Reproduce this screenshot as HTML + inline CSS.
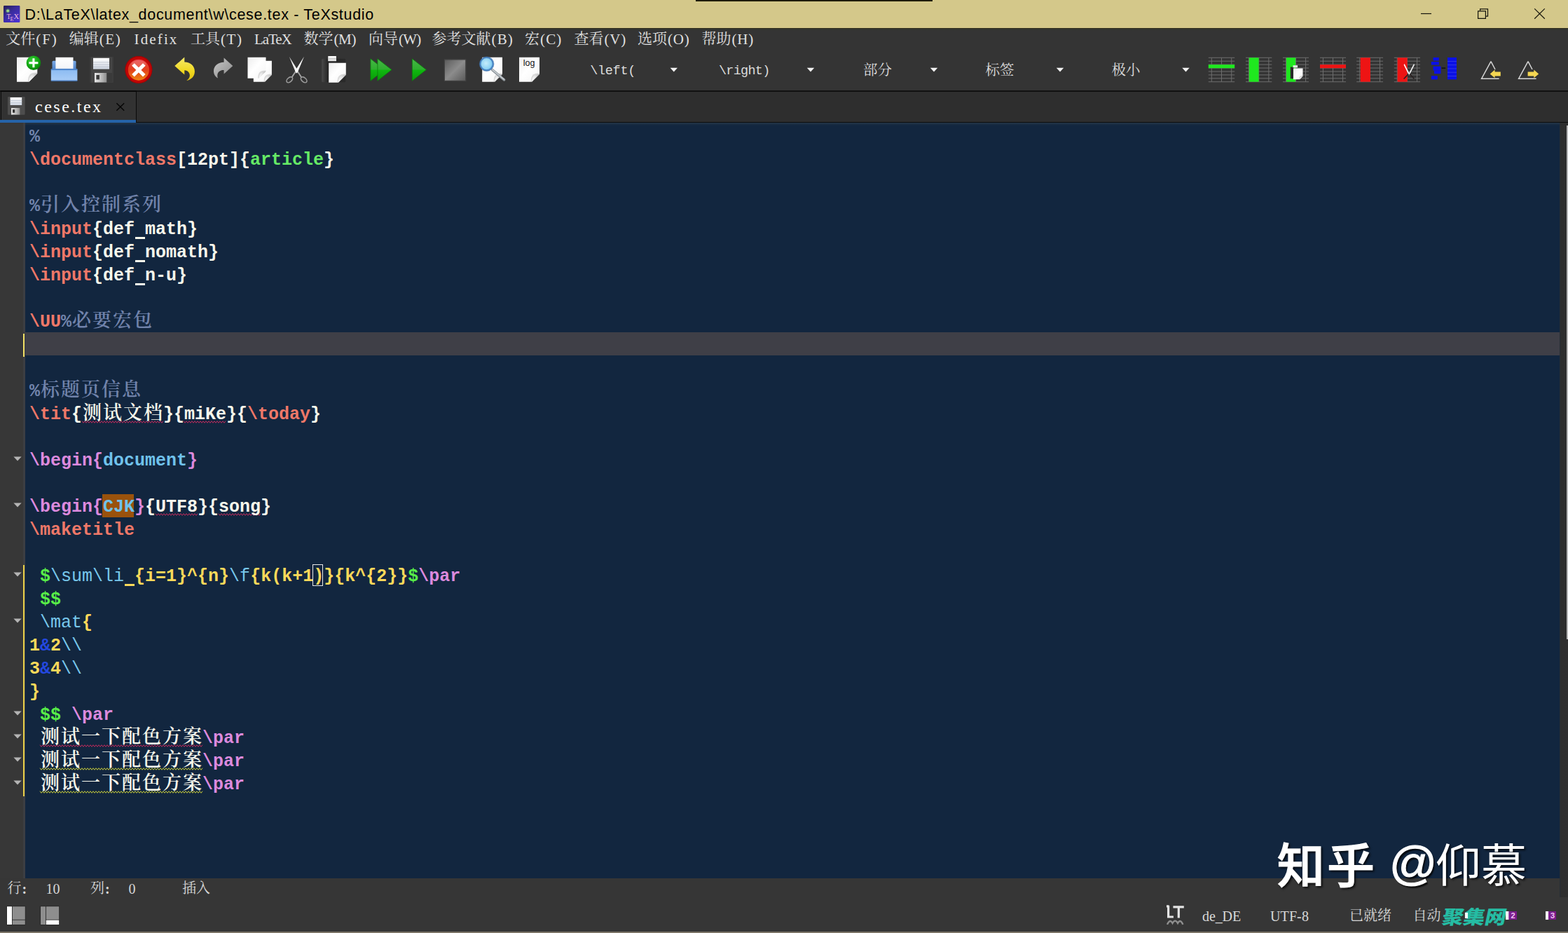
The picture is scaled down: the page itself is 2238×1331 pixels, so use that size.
<!DOCTYPE html>
<html><head><meta charset="utf-8"><title>TeXstudio</title><style>
html,body{margin:0;padding:0;}
body{width:2238px;height:1331px;overflow:hidden;background:#353535;position:relative;font-family:"Liberation Sans",sans-serif;}
.abs{position:absolute;}
.cj{position:absolute;white-space:nowrap;font-family:"Liberation Serif","Noto Serif CJK SC",serif;font-weight:normal;}
.cji{display:inline-block;vertical-align:top;margin-top:3px;height:27px;line-height:27px;font-family:"Liberation Serif","Noto Serif CJK SC",serif;font-size:27px;font-weight:600;letter-spacing:2px;padding-left:1px;box-sizing:border-box;white-space:nowrap;}
#title{left:0;top:0;width:2238px;height:40px;background:#d4c88a;}
#titletxt{left:36px;top:0;height:40px;line-height:39px;font-size:22px;color:#000;white-space:pre;letter-spacing:0px;}
#menubar{left:0;top:40px;width:2238px;height:30px;background:linear-gradient(#2f2c1a 0,#2f2c1a 1px,#323630 1.2px,#343434 4px);}
.mi{top:40px;height:30px;line-height:30px;font-family:"Liberation Serif",serif;font-size:20px;color:#dedede;white-space:pre;}
#toolbar{left:0;top:70px;width:2238px;height:59px;background:#343434;}
#tabbar{left:0;top:129px;width:2238px;height:46px;background:#2e2e2e;border-top:2px solid #111;box-sizing:border-box;}
#gutter{left:0;top:175px;width:36px;height:1078px;background:linear-gradient(90deg,#373737 0,#373737 33px,#3c3e43 33.5px,#3c3e43 36px);}
#editor{left:36px;top:175px;width:2190px;height:1078px;background:#12263f;}
#status{left:0;top:1253px;width:2238px;height:78px;background:#363636;}
.ln{position:absolute;left:42px;height:33px;line-height:37px;font-family:"Liberation Mono",monospace;font-weight:bold;font-size:25px;white-space:pre;color:#f8f8ec;letter-spacing:0;}

.nb{font-weight:normal;}
.us{-webkit-text-fill-color:transparent;background:linear-gradient(currentColor,currentColor) no-repeat 0.5px 24.6px/14px 3px;}
.c-cm{color:#7385ad;} .c-kw{color:#ef7868;} .c-w{color:#f8f8ec;} .c-g{color:#66ea66;}
.c-p{color:#dc8ade;} .c-b{color:#70c2ec;} .c-y{color:#fbd95a;} .c-d{color:#58ee48;}
.c-c{color:#78c8ec;} .c-a{color:#2448e0;}
</style></head><body><div id="title" class="abs"></div><div class="abs" style="left:993px;top:0;width:338px;height:2px;background:#1e1c08"></div><svg class="abs" style="left:0;top:0" width="600" height="40" viewBox="0 0 600 40"><text x="35.6" y="27.6" font-family="Liberation Sans, sans-serif" font-size="21.5" textLength="497.6" lengthAdjust="spacing" fill="#000">D:\LaTeX\latex_document\w\cese.tex - TeXstudio</text></svg><svg class="abs" style="left:0;top:0" width="40" height="40" viewBox="0 0 40 40"><defs><linearGradient id="gapp" x1="0" y1="0" x2=".8" y2="1"><stop offset="0" stop-color="#241e52"/><stop offset=".45" stop-color="#3a2c9c"/><stop offset="1" stop-color="#4a34d0"/></linearGradient></defs><rect x="5" y="8.1" width="23.4" height="23.8" rx="1.2" fill="url(#gapp)"/><circle cx="11.2" cy="15.4" r="2" fill="#b8e89a"/><circle cx="11.2" cy="15.4" r="3.2" fill="#6ab86a" opacity=".35"/><text x="9.6" y="27.4" font-family="Liberation Serif, serif" font-size="9.5" fill="#f0b8e0">T</text><text x="14.4" y="30" font-family="Liberation Serif, serif" font-size="8" fill="#f0b8e0">E</text><text x="19.6" y="27.4" font-family="Liberation Serif, serif" font-size="10.5" fill="#f0b8e0">X</text></svg><svg class="abs" style="left:2000px;top:0" width="238" height="40" viewBox="2000 0 238 40" fill="none" stroke="#15140c" stroke-width="1.2"><path d="M2028 19.5H2043"/><path d="M2109.6 15.9H2120.4V26.4H2109.6Z"/><path d="M2112.6 15.6V12.8H2123.5V23.2H2120.7"/><path d="M2190.2 12.4 2204.8 26.8M2204.8 12.4 2190.2 26.8"/></svg><div id="menubar" class="abs"></div><div id="toolbar" class="abs"></div><div id="tabbar" class="abs"></div><div id="gutter" class="abs"></div><div id="editor" class="abs"></div><div id="status" class="abs"></div><div class="cj" style="left:8.3px;top:45px;height:21px;line-height:21px;font-size:21px;color:#e0e0e0;">文件</div><div class="abs" style="left:51.3px;top:41.4px;height:30px;line-height:30px;font-family:'Liberation Serif';font-size:21px;font-weight:normal;color:#e0e0e0;white-space:pre;letter-spacing:1.944px">(F)</div><div class="cj" style="left:98.8px;top:45px;height:21px;line-height:21px;font-size:21px;color:#e0e0e0;">编辑</div><div class="abs" style="left:141.8px;top:41.4px;height:30px;line-height:30px;font-family:'Liberation Serif';font-size:21px;font-weight:normal;color:#e0e0e0;white-space:pre;letter-spacing:1.561px">(E)</div><div class="abs" style="left:191.5px;top:41.4px;height:30px;line-height:30px;font-family:'Liberation Serif';font-size:21px;font-weight:normal;color:#e0e0e0;white-space:pre;letter-spacing:2.143px">Idefix</div><div class="cj" style="left:272px;top:45px;height:21px;line-height:21px;font-size:21px;color:#e0e0e0;">工具</div><div class="abs" style="left:315px;top:41.4px;height:30px;line-height:30px;font-family:'Liberation Serif';font-size:21px;font-weight:normal;color:#e0e0e0;white-space:pre;letter-spacing:1.561px">(T)</div><div class="abs" style="left:363px;top:41.4px;height:30px;line-height:30px;font-family:'Liberation Serif';font-size:21px;font-weight:normal;color:#e0e0e0;white-space:pre;letter-spacing:-1.099px">LaTeX</div><div class="cj" style="left:433.5px;top:45px;height:21px;line-height:21px;font-size:21px;color:#e0e0e0;">数学</div><div class="abs" style="left:476.5px;top:41.4px;height:30px;line-height:30px;font-family:'Liberation Serif';font-size:21px;font-weight:normal;color:#e0e0e0;white-space:pre;letter-spacing:-0.386px">(M)</div><div class="cj" style="left:526px;top:45px;height:21px;line-height:21px;font-size:21px;color:#e0e0e0;">向导</div><div class="abs" style="left:569px;top:41.4px;height:30px;line-height:30px;font-family:'Liberation Serif';font-size:21px;font-weight:normal;color:#e0e0e0;white-space:pre;letter-spacing:-0.769px">(W)</div><div class="cj" style="left:616.5px;top:45px;height:21px;line-height:21px;font-size:21px;color:#e0e0e0;">参考文献</div><div class="abs" style="left:701.5px;top:41.4px;height:30px;line-height:30px;font-family:'Liberation Serif';font-size:21px;font-weight:normal;color:#e0e0e0;white-space:pre;letter-spacing:1.169px">(B)</div><div class="cj" style="left:749px;top:45px;height:21px;line-height:21px;font-size:21px;color:#e0e0e0;">宏</div><div class="abs" style="left:771px;top:41.4px;height:30px;line-height:30px;font-family:'Liberation Serif';font-size:21px;font-weight:normal;color:#e0e0e0;white-space:pre;letter-spacing:1.169px">(C)</div><div class="cj" style="left:819.5px;top:45px;height:21px;line-height:21px;font-size:21px;color:#e0e0e0;">查看</div><div class="abs" style="left:862.5px;top:41.4px;height:30px;line-height:30px;font-family:'Liberation Serif';font-size:21px;font-weight:normal;color:#e0e0e0;white-space:pre;letter-spacing:0.782px">(V)</div><div class="cj" style="left:910px;top:45px;height:21px;line-height:21px;font-size:21px;color:#e0e0e0;">选项</div><div class="abs" style="left:953px;top:41.4px;height:30px;line-height:30px;font-family:'Liberation Serif';font-size:21px;font-weight:normal;color:#e0e0e0;white-space:pre;letter-spacing:0.782px">(O)</div><div class="cj" style="left:1001.5px;top:45px;height:21px;line-height:21px;font-size:21px;color:#e0e0e0;">帮助</div><div class="abs" style="left:1044.5px;top:41.4px;height:30px;line-height:30px;font-family:'Liberation Serif';font-size:21px;font-weight:normal;color:#e0e0e0;white-space:pre;letter-spacing:0.782px">(H)</div><svg class="abs" style="left:0;top:0" width="2238" height="180" viewBox="0 0 2238 180"><defs>
<linearGradient id="gpage" x1="0" y1="0" x2="1" y2="1"><stop offset="0" stop-color="#ededed"/><stop offset=".45" stop-color="#ffffff"/><stop offset="1" stop-color="#f4f4f4"/></linearGradient>
<linearGradient id="gcurl" x1="1" y1="0" x2="0" y2="1"><stop offset="0" stop-color="#b4b4b4"/><stop offset=".45" stop-color="#e6e6e6"/><stop offset="1" stop-color="#ffffff"/></linearGradient>
<radialGradient id="ggreen" cx=".4" cy=".35" r=".7"><stop offset="0" stop-color="#3fd23f"/><stop offset=".6" stop-color="#12a812"/><stop offset="1" stop-color="#0a7a0a"/></radialGradient>
<linearGradient id="gtray" x1="0" y1="0" x2="0" y2="1"><stop offset="0" stop-color="#5d96dd"/><stop offset=".15" stop-color="#8fbdf2"/><stop offset="1" stop-color="#a9cdf7"/></linearGradient>
<linearGradient id="gtrayb" x1="0" y1="0" x2="0" y2="1"><stop offset="0" stop-color="#7aa9e6"/><stop offset="1" stop-color="#4f82c8"/></linearGradient>
<linearGradient id="gpaper" x1="0" y1="0" x2="0" y2="1"><stop offset="0" stop-color="#ffffff"/><stop offset=".8" stop-color="#f6f7fa"/><stop offset="1" stop-color="#dfe6f0"/></linearGradient>
<linearGradient id="glabel" x1="0" y1="0" x2="0" y2="1"><stop offset="0" stop-color="#ffffff"/><stop offset="1" stop-color="#cfd6e2"/></linearGradient>
<linearGradient id="gmetal" x1="0" y1="0" x2="1" y2="0"><stop offset="0" stop-color="#e8e8e8"/><stop offset=".6" stop-color="#b8b8b8"/><stop offset="1" stop-color="#8c8c8c"/></linearGradient>
<radialGradient id="gred" cx=".5" cy=".3" r=".8"><stop offset="0" stop-color="#f06a5a"/><stop offset=".5" stop-color="#e84a1a"/><stop offset="1" stop-color="#ea7a10"/></radialGradient>
<linearGradient id="gredin" x1="0" y1="0" x2="0" y2="1"><stop offset="0" stop-color="#e8434a"/><stop offset=".5" stop-color="#e2401c"/><stop offset="1" stop-color="#ee8612"/></linearGradient>
<linearGradient id="gyel" x1="0" y1="0" x2="0" y2="1"><stop offset="0" stop-color="#f6ea6a"/><stop offset=".6" stop-color="#f0d820"/><stop offset="1" stop-color="#e0c010"/></linearGradient>
<linearGradient id="ggrey" x1="0" y1="0" x2="1" y2="1"><stop offset="0" stop-color="#c8c8c8"/><stop offset="1" stop-color="#8a8a8a"/></linearGradient>
<linearGradient id="gplay" x1="0" y1="0" x2="0" y2="1"><stop offset="0" stop-color="#46b846"/><stop offset=".48" stop-color="#2fae2f"/><stop offset=".52" stop-color="#0fb80f"/><stop offset="1" stop-color="#0a9a0a"/></linearGradient>
<linearGradient id="gstop" x1="0" y1="0" x2="1" y2="1"><stop offset="0" stop-color="#5c5c5c"/><stop offset=".5" stop-color="#8c8c8c"/><stop offset="1" stop-color="#5a5a5a"/></linearGradient>
<radialGradient id="glens" cx=".45" cy=".45" r=".6"><stop offset="0" stop-color="#c4ecfb"/><stop offset=".7" stop-color="#8ed3f4"/><stop offset="1" stop-color="#5aa6dc"/></radialGradient>
<linearGradient id="gclip" x1="0" y1="0" x2="1" y2="0"><stop offset="0" stop-color="#4a4a4a"/><stop offset=".25" stop-color="#262626"/><stop offset="1" stop-color="#2a2a2a"/></linearGradient>
</defs><path d="M24 81.8H53.3V104.7L41.3 116.7H24Z" fill="url(#gpage)"/><path d="M53.3 103.5Q38.9 102.3 40.1 116.7L41.3 116.7L53.3 104.7Z" fill="#000" opacity=".13"/><path d="M53.3 104.7Q41.5 104.9 41.3 116.7Z" fill="url(#gcurl)"/><circle cx="47.9" cy="89.7" r="10.3" fill="url(#ggreen)"/><path d="M46.4 83.2h3v5h5v3h-5v5h-3v-5h-5v-3h5z" fill="#fff"/><rect x="74.5" y="86.7" width="34" height="13" rx="1.5" fill="url(#gtrayb)"/><rect x="79.4" y="81.8" width="25.1" height="17" fill="url(#gpaper)"/><rect x="72.8" y="98.3" width="37.6" height="17.2" rx="1.2" fill="url(#gtray)"/><rect x="72.8" y="98.3" width="37.6" height="1.6" fill="#4a80c8"/><rect x="72.8" y="114.5" width="37.6" height="1.6" fill="#3a6cb0" opacity=".8"/><rect x="128" y="81.3" width="34" height="36.4" rx="1.5" fill="#454545"/><rect x="152.4" y="104" width="7.4" height="13.5" fill="#3a3a3a"/><rect x="128" y="81.3" width="2" height="36.4" fill="#3a3a3a"/><rect x="160" y="81.3" width="2" height="36.4" fill="#3c3c3c"/><rect x="133" y="82.8" width="23" height="15.8" fill="url(#glabel)"/><rect x="133" y="88.3" width="23" height="1" fill="#c3c9d4"/><rect x="133" y="91.6" width="23" height="1" fill="#c3c9d4"/><rect x="133" y="94.9" width="23" height="1" fill="#bcc3cf"/><rect x="135" y="104" width="17.2" height="13.5" fill="url(#gmetal)"/><rect x="137.4" y="107" width="4.5" height="6.4" fill="#3a3a3a"/><circle cx="197.9" cy="99.5" r="19.4" fill="#c20606"/><circle cx="197.9" cy="99.5" r="18.9" fill="none" stroke="#8e0000" stroke-width="1.2" opacity=".55"/><circle cx="197.9" cy="99.7" r="15" fill="url(#gredin)"/><ellipse cx="197.9" cy="91.6" rx="10.5" ry="5.6" fill="#fff" opacity=".16"/><path d="M190 92 205.8 107.8M205.8 92 190 107.8" stroke="#fff" stroke-width="5.1" stroke-linecap="butt"/><path d="M249.3 94.1 263.3 81.6 263.3 88.6C272 88.8 278.2 94.5 277.9 102.5 277.6 109.5 272.5 113.8 266.3 115 271 111.5 272 107 269.6 103.5 268 101.2 265.8 100.3 263.3 100.2L263.3 106.6Z" fill="url(#gyel)"/><path d="M332.3 94.1 319.6 82.6 319.6 88.8C311.5 89 305 94 305 101.2 305 106.2 307.6 109.6 310.9 111.4 309.6 107.6 310.3 104.2 312.8 102 314.6 100.4 317 99.8 319.6 99.9L319.6 105.6Z" fill="url(#ggrey)"/><path d="M361.8 86.7H387.9V106.7L377.9 116.7H361.8Z" fill="url(#gpage)"/><path d="M387.9 105.5Q375.9 104.7 376.7 116.7L377.9 116.7L387.9 106.7Z" fill="#000" opacity=".13"/><path d="M387.9 106.7Q378.1 106.9 377.9 116.7Z" fill="url(#gcurl)"/><path d="M379.5 86.7V101.8L369.5 111.8V116.7" fill="none" stroke="#bdbdbd" stroke-width="0"/><path d="M353.5 81.8H379.5V101.8L369.5 111.8H353.5Z" fill="url(#gpage)"/><path d="M379.5 100.6Q367.5 99.8 368.3 111.8L369.5 111.8L379.5 101.8Z" fill="#000" opacity=".13"/><path d="M379.5 101.8Q369.7 102.0 369.5 111.8Z" fill="url(#gcurl)"/><path d="M412.8 80.8 425.8 101.4 422.6 104.4Z" fill="#f2f2f2"/><path d="M434 80.8 421 101.4 424.2 104.4Z" fill="#ffffff"/><path d="M425.2 102.6 430.2 110.2M421.6 102.6 416.6 110.2" stroke="#a8a8a8" stroke-width="1.8" fill="none"/><ellipse cx="413.3" cy="113.8" rx="5" ry="3" transform="rotate(-40 413.3 113.8)" fill="none" stroke="#9c9c9c" stroke-width="1.6"/><ellipse cx="433.7" cy="113.8" rx="5" ry="3" transform="rotate(40 433.7 113.8)" fill="none" stroke="#9c9c9c" stroke-width="1.6"/><rect x="459.3" y="83.8" width="34" height="33.4" rx="1.5" fill="url(#gclip)"/><rect x="468.2" y="80" width="11.8" height="7.2" fill="#e6e6e6"/><rect x="469.2" y="80" width="9.8" height="2" fill="#ffffff"/><rect x="468.2" y="83.4" width="11.8" height="1" fill="#bdbdbd"/><path d="M469.2 89.7H493.8V106.7L482.8 117.7H469.2Z" fill="url(#gpage)"/><path d="M493.8 105.5Q480.6 104.5 481.6 117.7L482.8 117.7L493.8 106.7Z" fill="#000" opacity=".13"/><path d="M493.8 106.7Q483.0 106.9 482.8 117.7Z" fill="url(#gcurl)"/><path d="M528.9 83.8 549 99.5 528.9 115.3Z" fill="url(#gplay)" stroke="#0c7a0c" stroke-width=".8"/><path d="M538.9 83.8 559 99.5 538.9 115.3Z" fill="url(#gplay)" stroke="#0c7a0c" stroke-width=".8"/><path d="M588.3 83.8 608.4 99.5 588.3 115.3Z" fill="url(#gplay)" stroke="#0c7a0c" stroke-width=".8"/><rect x="634.8" y="85.3" width="29.6" height="29.6" fill="url(#gstop)"/><rect x="634.3" y="84.8" width="30.6" height="30.6" fill="none" stroke="#454545" stroke-width="1"/><path d="M688.2 81.8H717V105.7L706 116.7H688.2Z" fill="url(#gpage)"/><path d="M717 104.5Q703.8 103.5 704.8 116.7L706 116.7L717 105.7Z" fill="#000" opacity=".13"/><path d="M717 105.7Q706.2 105.9 706 116.7Z" fill="url(#gcurl)"/><path d="M702.6 99.6 719.6 113.8" stroke="#8f969c" stroke-width="3.6" stroke-linecap="round"/><path d="M702.6 99.2 719.4 113.2" stroke="#cfd4d8" stroke-width="1.3" stroke-linecap="round"/><circle cx="694.6" cy="91.2" r="9.2" fill="url(#glens)" stroke="#4a86c4" stroke-width="2.2"/><circle cx="694.6" cy="91.2" r="10.4" fill="none" stroke="#2e5f98" stroke-width=".6" opacity=".7"/><path d="M741 81.8H770V105.7L759 116.7H741Z" fill="url(#gpage)"/><path d="M770 104.5Q756.8 103.5 757.8 116.7L759 116.7L770 105.7Z" fill="#000" opacity=".13"/><path d="M770 105.7Q759.2 105.9 759 116.7Z" fill="url(#gcurl)"/><text x="755.2" y="93.6" font-family="Liberation Sans, sans-serif" font-size="12.5" text-anchor="middle" fill="#111">log</text><path d="M956.5999999999999 96.8H967.0L961.8 102.4Z" fill="#f2f2f2"/><path d="M1151.8 96.8H1162.2L1157 102.4Z" fill="#f2f2f2"/><path d="M1327.8 96.8H1338.2L1333 102.4Z" fill="#f2f2f2"/><path d="M1507.8 96.8H1518.2L1513 102.4Z" fill="#f2f2f2"/><path d="M1687.3 96.8H1697.7L1692.5 102.4Z" fill="#f2f2f2"/><rect x="1724.8" y="81.80" width="37.4" height="1" fill="#6d6d6d"/><rect x="1724.8" y="86.71" width="37.4" height="1" fill="#6d6d6d"/><rect x="1724.8" y="91.63" width="37.4" height="1" fill="#6d6d6d"/><rect x="1724.8" y="96.54" width="37.4" height="1" fill="#6d6d6d"/><rect x="1724.8" y="101.46" width="37.4" height="1" fill="#6d6d6d"/><rect x="1724.8" y="106.37" width="37.4" height="1" fill="#6d6d6d"/><rect x="1724.8" y="111.29" width="37.4" height="1" fill="#6d6d6d"/><rect x="1724.8" y="116.20" width="37.4" height="1" fill="#6d6d6d"/><rect x="1728.79" y="82.3" width="1" height="34.4" fill="#6d6d6d"/><rect x="1743.00" y="82.3" width="1" height="34.4" fill="#6d6d6d"/><rect x="1757.21" y="82.3" width="1" height="34.4" fill="#6d6d6d"/><rect x="1724.8" y="92.2" width="37.4" height="5" fill="#1fe81f"/><rect x="1778" y="81.80" width="37.3" height="1" fill="#6d6d6d"/><rect x="1778" y="86.71" width="37.3" height="1" fill="#6d6d6d"/><rect x="1778" y="91.63" width="37.3" height="1" fill="#6d6d6d"/><rect x="1778" y="96.54" width="37.3" height="1" fill="#6d6d6d"/><rect x="1778" y="101.46" width="37.3" height="1" fill="#6d6d6d"/><rect x="1778" y="106.37" width="37.3" height="1" fill="#6d6d6d"/><rect x="1778" y="111.29" width="37.3" height="1" fill="#6d6d6d"/><rect x="1778" y="116.20" width="37.3" height="1" fill="#6d6d6d"/><rect x="1781.98" y="82.3" width="1" height="34.4" fill="#6d6d6d"/><rect x="1796.15" y="82.3" width="1" height="34.4" fill="#6d6d6d"/><rect x="1810.32" y="82.3" width="1" height="34.4" fill="#6d6d6d"/><rect x="1782.8" y="82.3" width="13.8" height="34.4" fill="#1fe81f"/><rect x="1831" y="81.80" width="37.0" height="1" fill="#6d6d6d"/><rect x="1831" y="86.71" width="37.0" height="1" fill="#6d6d6d"/><rect x="1831" y="91.63" width="37.0" height="1" fill="#6d6d6d"/><rect x="1831" y="96.54" width="37.0" height="1" fill="#6d6d6d"/><rect x="1831" y="101.46" width="37.0" height="1" fill="#6d6d6d"/><rect x="1831" y="106.37" width="37.0" height="1" fill="#6d6d6d"/><rect x="1831" y="111.29" width="37.0" height="1" fill="#6d6d6d"/><rect x="1831" y="116.20" width="37.0" height="1" fill="#6d6d6d"/><rect x="1834.94" y="82.3" width="1" height="34.4" fill="#6d6d6d"/><rect x="1849.00" y="82.3" width="1" height="34.4" fill="#6d6d6d"/><rect x="1863.06" y="82.3" width="1" height="34.4" fill="#6d6d6d"/><rect x="1836" y="82.3" width="13.2" height="34.4" fill="#1fe81f"/><rect x="1841.8" y="95.6" width="5" height="16.6" fill="#2a2a2a"/><rect x="1845.5" y="93.2" width="6.6" height="3.2" fill="#e8e8e8"/><path d="M1846 97.4H1859.5V108.8L1855.0 113.3H1846Z" fill="url(#gpage)"/><path d="M1859.5 107.6Q1854.1 107.9 1853.8 113.3L1855.0 113.3L1859.5 108.8Z" fill="#000" opacity=".13"/><path d="M1859.5 108.8Q1855.1 108.9 1855.0 113.3Z" fill="url(#gcurl)"/><rect x="1884" y="81.80" width="37.0" height="1" fill="#6d6d6d"/><rect x="1884" y="86.71" width="37.0" height="1" fill="#6d6d6d"/><rect x="1884" y="91.63" width="37.0" height="1" fill="#6d6d6d"/><rect x="1884" y="96.54" width="37.0" height="1" fill="#6d6d6d"/><rect x="1884" y="101.46" width="37.0" height="1" fill="#6d6d6d"/><rect x="1884" y="106.37" width="37.0" height="1" fill="#6d6d6d"/><rect x="1884" y="111.29" width="37.0" height="1" fill="#6d6d6d"/><rect x="1884" y="116.20" width="37.0" height="1" fill="#6d6d6d"/><rect x="1887.94" y="82.3" width="1" height="34.4" fill="#6d6d6d"/><rect x="1902.00" y="82.3" width="1" height="34.4" fill="#6d6d6d"/><rect x="1916.06" y="82.3" width="1" height="34.4" fill="#6d6d6d"/><rect x="1884" y="92.2" width="37" height="5" fill="#ee1414"/><rect x="1936.2" y="81.80" width="37.8" height="1" fill="#6d6d6d"/><rect x="1936.2" y="86.71" width="37.8" height="1" fill="#6d6d6d"/><rect x="1936.2" y="91.63" width="37.8" height="1" fill="#6d6d6d"/><rect x="1936.2" y="96.54" width="37.8" height="1" fill="#6d6d6d"/><rect x="1936.2" y="101.46" width="37.8" height="1" fill="#6d6d6d"/><rect x="1936.2" y="106.37" width="37.8" height="1" fill="#6d6d6d"/><rect x="1936.2" y="111.29" width="37.8" height="1" fill="#6d6d6d"/><rect x="1936.2" y="116.20" width="37.8" height="1" fill="#6d6d6d"/><rect x="1940.24" y="82.3" width="1" height="34.4" fill="#6d6d6d"/><rect x="1954.60" y="82.3" width="1" height="34.4" fill="#6d6d6d"/><rect x="1968.96" y="82.3" width="1" height="34.4" fill="#6d6d6d"/><rect x="1941.7" y="82.3" width="14.2" height="34.4" fill="#ee1414"/><rect x="1989.8" y="81.80" width="37.2" height="1" fill="#6d6d6d"/><rect x="1989.8" y="86.71" width="37.2" height="1" fill="#6d6d6d"/><rect x="1989.8" y="91.63" width="37.2" height="1" fill="#6d6d6d"/><rect x="1989.8" y="96.54" width="37.2" height="1" fill="#6d6d6d"/><rect x="1989.8" y="101.46" width="37.2" height="1" fill="#6d6d6d"/><rect x="1989.8" y="106.37" width="37.2" height="1" fill="#6d6d6d"/><rect x="1989.8" y="111.29" width="37.2" height="1" fill="#6d6d6d"/><rect x="1989.8" y="116.20" width="37.2" height="1" fill="#6d6d6d"/><rect x="1993.76" y="82.3" width="1" height="34.4" fill="#6d6d6d"/><rect x="2007.90" y="82.3" width="1" height="34.4" fill="#6d6d6d"/><rect x="2022.04" y="82.3" width="1" height="34.4" fill="#6d6d6d"/><rect x="1994.6" y="82.3" width="14.1" height="34.4" fill="#ee1414"/><path d="M2004.6 91 2012 105.4 2010.6 106.8 2003.6 92.6Z" fill="#fff"/><path d="M2018 91 2010.4 105.4 2011.8 106.8 2019 92.6Z" fill="#f0f0f0"/><path d="M2010.4 105.6 2003.6 112.6M2012.2 105.6 2018.4 112.6" stroke="#2a2020" stroke-width="1.5" fill="none"/><rect x="2066" y="82" width="13" height="31.4" fill="#0a10e6"/><rect x="2045.6" y="82" width="8.2" height="4.6" fill="#0a10e6"/><rect x="2042.8" y="88" width="11" height="4.6" fill="#0a10e6"/><rect x="2045.6" y="94.6" width="10.9" height="6" fill="#0a10e6"/><rect x="2047" y="100.6" width="9.5" height="4.6" fill="#0a10e6"/><rect x="2042.8" y="108.2" width="9" height="5.2" fill="#0a10e6"/><rect x="2057.6" y="96.4" width="5.6" height="1.6" fill="#111"/><rect x="2066" y="87.2" width="13" height=".7" fill="#5a60e8" opacity=".7"/><rect x="2066" y="92.4" width="13" height=".7" fill="#5a60e8" opacity=".7"/><rect x="2066" y="97.6" width="13" height=".7" fill="#5a60e8" opacity=".7"/><rect x="2066" y="102.8" width="13" height=".7" fill="#5a60e8" opacity=".7"/><rect x="2066" y="108.0" width="13" height=".7" fill="#5a60e8" opacity=".7"/><path d="M2128 87.6 2114.6 112.2H2139.6" fill="none" stroke="#d6d6d6" stroke-width="1.5" stroke-linejoin="miter"/><path d="M2128 87.6 2134 99" stroke="#d6d6d6" stroke-width="1.5"/><path d="M2126.7 105.4 2133.6 99.5V102.4H2141.8V108.6H2133.6V111.3Z" fill="#f4d652"/><path d="M2181 87.6 2167.6 112.2H2192.6" fill="none" stroke="#d6d6d6" stroke-width="1.5"/><path d="M2181 87.6 2187 99" stroke="#d6d6d6" stroke-width="1.5"/><path d="M2196.2 105.4 2189.3 99.5V102.4H2180.6V108.6H2189.3V111.3Z" fill="#f4d652"/></svg><div class="abs" style="left:842.2px;top:87px;height:30px;line-height:30px;font-family:'Liberation Mono';font-size:18.5px;font-weight:normal;color:#dcdcdc;white-space:pre;letter-spacing:-0.302px">\left(</div><div class="abs" style="left:1026px;top:87px;height:30px;line-height:30px;font-family:'Liberation Mono';font-size:18.5px;font-weight:normal;color:#dcdcdc;white-space:pre;letter-spacing:-0.730px">\right)</div><div class="cj" style="left:1232px;top:89.5px;height:20.5px;line-height:20.5px;font-size:20.5px;color:#dcdcdc;">部分</div><div class="cj" style="left:1406.5px;top:89.5px;height:20.5px;line-height:20.5px;font-size:20.5px;color:#dcdcdc;">标签</div><div class="cj" style="left:1586.5px;top:89.5px;height:20.5px;line-height:20.5px;font-size:20.5px;color:#dcdcdc;">极小</div><div class="abs" style="left:1px;top:129px;width:193.5px;height:46px;background:#323232;border:solid #0a0a0a;border-width:2px 1px 0 1px;box-sizing:border-box"></div><div class="abs" style="left:194px;top:174px;width:2044px;height:1.4px;background:#0c0c0c"></div><div class="abs" style="left:0;top:170.6px;width:194px;height:4.6px;background:#2563a9"></div><svg class="abs" style="left:0;top:125px" width="200" height="50" viewBox="0 125 200 50"><rect x="11" y="138" width="24.6" height="25.8" rx="1" fill="#4d4d4d"/><rect x="14.6" y="139" width="16.6" height="11" fill="url(#glabel)"/><rect x="14.6" y="143" width="16.6" height=".8" fill="#bcc5d2"/><rect x="14.6" y="146" width="16.6" height=".8" fill="#bcc5d2"/><rect x="16" y="154" width="12.4" height="9.6" fill="url(#gmetal)"/><rect x="18" y="156.2" width="3.2" height="4.6" fill="#333"/><path d="M166.4 147.2 177.2 157.8M177.2 147.2 166.4 157.8" stroke="#050505" stroke-width="1.4"/></svg><div class="abs" style="left:50px;top:136.6px;height:30px;line-height:30px;font-family:'Liberation Serif';font-size:24px;font-weight:normal;color:#ffffff;white-space:pre;letter-spacing:2.497px">cese.tex</div><div class="abs" style="left:36px;top:175px;width:2190px;height:4px;background:linear-gradient(#243648,#12263f)"></div><div class="abs" style="left:36px;top:474px;width:2190px;height:33px;background:#3f3f47"></div><div class="abs" style="left:32.8px;top:476px;width:2.6px;height:33px;background:#f2e066"></div><div class="abs" style="left:33px;top:806px;width:2.4px;height:330px;background:#e8d04a"></div><div class="abs" style="left:146px;top:705px;width:45px;height:33px;background:#9a520c"></div><div class="abs" style="left:446px;top:805px;width:15px;height:31px;border:1px solid #e8e8e8;box-sizing:border-box"></div><svg class="abs" style="left:0;top:597.5px" width="237" height="8" viewBox="0 597.5 237 8"><path d="M117.0 600.2L119.0 602.8L121.0 600.2L123.0 602.8L125.0 600.2L127.0 602.8L129.0 600.2L131.0 602.8L133.0 600.2L135.0 602.8L137.0 600.2L139.0 602.8L141.0 600.2L143.0 602.8L145.0 600.2L147.0 602.8L149.0 600.2L151.0 602.8L153.0 600.2L155.0 602.8L157.0 600.2L159.0 602.8L161.0 600.2L163.0 602.8L165.0 600.2L167.0 602.8L169.0 600.2L171.0 602.8L173.0 600.2L175.0 602.8L177.0 600.2L179.0 602.8L181.0 600.2L183.0 602.8L185.0 600.2L187.0 602.8L189.0 600.2L191.0 602.8L193.0 600.2L195.0 602.8L197.0 600.2L199.0 602.8L201.0 600.2L203.0 602.8L205.0 600.2L207.0 602.8L209.0 600.2L211.0 602.8L213.0 600.2L215.0 602.8L217.0 600.2L219.0 602.8L221.0 600.2L223.0 602.8L225.0 600.2L227.0 602.8L229.0 600.2L231.0 602.8L233.0 600.2" fill="none" stroke="#c42a5c" stroke-width="1"/></svg><svg class="abs" style="left:0;top:597.5px" width="326" height="8" viewBox="0 597.5 326 8"><path d="M262.0 600.2L264.0 602.8L266.0 600.2L268.0 602.8L270.0 600.2L272.0 602.8L274.0 600.2L276.0 602.8L278.0 600.2L280.0 602.8L282.0 600.2L284.0 602.8L286.0 600.2L288.0 602.8L290.0 600.2L292.0 602.8L294.0 600.2L296.0 602.8L298.0 600.2L300.0 602.8L302.0 600.2L304.0 602.8L306.0 600.2L308.0 602.8L310.0 600.2L312.0 602.8L314.0 600.2L316.0 602.8L318.0 600.2L320.0 602.8L322.0 600.2" fill="none" stroke="#c42a5c" stroke-width="1"/></svg><svg class="abs" style="left:0;top:729.5px" width="286" height="8" viewBox="0 729.5 286 8"><path d="M222.0 732.2L224.0 734.8L226.0 732.2L228.0 734.8L230.0 732.2L232.0 734.8L234.0 732.2L236.0 734.8L238.0 732.2L240.0 734.8L242.0 732.2L244.0 734.8L246.0 732.2L248.0 734.8L250.0 732.2L252.0 734.8L254.0 732.2L256.0 734.8L258.0 732.2L260.0 734.8L262.0 732.2L264.0 734.8L266.0 732.2L268.0 734.8L270.0 732.2L272.0 734.8L274.0 732.2L276.0 734.8L278.0 732.2L280.0 734.8L282.0 732.2" fill="none" stroke="#c42a5c" stroke-width="1"/></svg><svg class="abs" style="left:0;top:729.5px" width="376" height="8" viewBox="0 729.5 376 8"><path d="M312.0 732.2L314.0 734.8L316.0 732.2L318.0 734.8L320.0 732.2L322.0 734.8L324.0 732.2L326.0 734.8L328.0 732.2L330.0 734.8L332.0 732.2L334.0 734.8L336.0 732.2L338.0 734.8L340.0 732.2L342.0 734.8L344.0 732.2L346.0 734.8L348.0 732.2L350.0 734.8L352.0 732.2L354.0 734.8L356.0 732.2L358.0 734.8L360.0 732.2L362.0 734.8L364.0 732.2L366.0 734.8L368.0 732.2L370.0 734.8L372.0 732.2" fill="none" stroke="#c42a5c" stroke-width="1"/></svg><svg class="abs" style="left:0;top:1059.5px" width="293" height="8" viewBox="0 1059.5 293 8"><path d="M57.0 1062.2L59.0 1064.8L61.0 1062.2L63.0 1064.8L65.0 1062.2L67.0 1064.8L69.0 1062.2L71.0 1064.8L73.0 1062.2L75.0 1064.8L77.0 1062.2L79.0 1064.8L81.0 1062.2L83.0 1064.8L85.0 1062.2L87.0 1064.8L89.0 1062.2L91.0 1064.8L93.0 1062.2L95.0 1064.8L97.0 1062.2L99.0 1064.8L101.0 1062.2L103.0 1064.8L105.0 1062.2L107.0 1064.8L109.0 1062.2L111.0 1064.8L113.0 1062.2L115.0 1064.8L117.0 1062.2L119.0 1064.8L121.0 1062.2L123.0 1064.8L125.0 1062.2L127.0 1064.8L129.0 1062.2L131.0 1064.8L133.0 1062.2L135.0 1064.8L137.0 1062.2L139.0 1064.8L141.0 1062.2L143.0 1064.8L145.0 1062.2L147.0 1064.8L149.0 1062.2L151.0 1064.8L153.0 1062.2L155.0 1064.8L157.0 1062.2L159.0 1064.8L161.0 1062.2L163.0 1064.8L165.0 1062.2L167.0 1064.8L169.0 1062.2L171.0 1064.8L173.0 1062.2L175.0 1064.8L177.0 1062.2L179.0 1064.8L181.0 1062.2L183.0 1064.8L185.0 1062.2L187.0 1064.8L189.0 1062.2L191.0 1064.8L193.0 1062.2L195.0 1064.8L197.0 1062.2L199.0 1064.8L201.0 1062.2L203.0 1064.8L205.0 1062.2L207.0 1064.8L209.0 1062.2L211.0 1064.8L213.0 1062.2L215.0 1064.8L217.0 1062.2L219.0 1064.8L221.0 1062.2L223.0 1064.8L225.0 1062.2L227.0 1064.8L229.0 1062.2L231.0 1064.8L233.0 1062.2L235.0 1064.8L237.0 1062.2L239.0 1064.8L241.0 1062.2L243.0 1064.8L245.0 1062.2L247.0 1064.8L249.0 1062.2L251.0 1064.8L253.0 1062.2L255.0 1064.8L257.0 1062.2L259.0 1064.8L261.0 1062.2L263.0 1064.8L265.0 1062.2L267.0 1064.8L269.0 1062.2L271.0 1064.8L273.0 1062.2L275.0 1064.8L277.0 1062.2L279.0 1064.8L281.0 1062.2L283.0 1064.8L285.0 1062.2L287.0 1064.8L289.0 1062.2" fill="none" stroke="#c42a5c" stroke-width="1"/></svg><svg class="abs" style="left:0;top:1092.5px" width="293" height="8" viewBox="0 1092.5 293 8"><path d="M57.0 1095.2L59.0 1097.8L61.0 1095.2L63.0 1097.8L65.0 1095.2L67.0 1097.8L69.0 1095.2L71.0 1097.8L73.0 1095.2L75.0 1097.8L77.0 1095.2L79.0 1097.8L81.0 1095.2L83.0 1097.8L85.0 1095.2L87.0 1097.8L89.0 1095.2L91.0 1097.8L93.0 1095.2L95.0 1097.8L97.0 1095.2L99.0 1097.8L101.0 1095.2L103.0 1097.8L105.0 1095.2L107.0 1097.8L109.0 1095.2L111.0 1097.8L113.0 1095.2L115.0 1097.8L117.0 1095.2L119.0 1097.8L121.0 1095.2L123.0 1097.8L125.0 1095.2L127.0 1097.8L129.0 1095.2L131.0 1097.8L133.0 1095.2L135.0 1097.8L137.0 1095.2L139.0 1097.8L141.0 1095.2L143.0 1097.8L145.0 1095.2L147.0 1097.8L149.0 1095.2L151.0 1097.8L153.0 1095.2L155.0 1097.8L157.0 1095.2L159.0 1097.8L161.0 1095.2L163.0 1097.8L165.0 1095.2L167.0 1097.8L169.0 1095.2L171.0 1097.8L173.0 1095.2L175.0 1097.8L177.0 1095.2L179.0 1097.8L181.0 1095.2L183.0 1097.8L185.0 1095.2L187.0 1097.8L189.0 1095.2L191.0 1097.8L193.0 1095.2L195.0 1097.8L197.0 1095.2L199.0 1097.8L201.0 1095.2L203.0 1097.8L205.0 1095.2L207.0 1097.8L209.0 1095.2L211.0 1097.8L213.0 1095.2L215.0 1097.8L217.0 1095.2L219.0 1097.8L221.0 1095.2L223.0 1097.8L225.0 1095.2L227.0 1097.8L229.0 1095.2L231.0 1097.8L233.0 1095.2L235.0 1097.8L237.0 1095.2L239.0 1097.8L241.0 1095.2L243.0 1097.8L245.0 1095.2L247.0 1097.8L249.0 1095.2L251.0 1097.8L253.0 1095.2L255.0 1097.8L257.0 1095.2L259.0 1097.8L261.0 1095.2L263.0 1097.8L265.0 1095.2L267.0 1097.8L269.0 1095.2L271.0 1097.8L273.0 1095.2L275.0 1097.8L277.0 1095.2L279.0 1097.8L281.0 1095.2L283.0 1097.8L285.0 1095.2L287.0 1097.8L289.0 1095.2" fill="none" stroke="#c8cc3a" stroke-width="1"/></svg><svg class="abs" style="left:0;top:1125.5px" width="293" height="8" viewBox="0 1125.5 293 8"><path d="M57.0 1128.2L59.0 1130.8L61.0 1128.2L63.0 1130.8L65.0 1128.2L67.0 1130.8L69.0 1128.2L71.0 1130.8L73.0 1128.2L75.0 1130.8L77.0 1128.2L79.0 1130.8L81.0 1128.2L83.0 1130.8L85.0 1128.2L87.0 1130.8L89.0 1128.2L91.0 1130.8L93.0 1128.2L95.0 1130.8L97.0 1128.2L99.0 1130.8L101.0 1128.2L103.0 1130.8L105.0 1128.2L107.0 1130.8L109.0 1128.2L111.0 1130.8L113.0 1128.2L115.0 1130.8L117.0 1128.2L119.0 1130.8L121.0 1128.2L123.0 1130.8L125.0 1128.2L127.0 1130.8L129.0 1128.2L131.0 1130.8L133.0 1128.2L135.0 1130.8L137.0 1128.2L139.0 1130.8L141.0 1128.2L143.0 1130.8L145.0 1128.2L147.0 1130.8L149.0 1128.2L151.0 1130.8L153.0 1128.2L155.0 1130.8L157.0 1128.2L159.0 1130.8L161.0 1128.2L163.0 1130.8L165.0 1128.2L167.0 1130.8L169.0 1128.2L171.0 1130.8L173.0 1128.2L175.0 1130.8L177.0 1128.2L179.0 1130.8L181.0 1128.2L183.0 1130.8L185.0 1128.2L187.0 1130.8L189.0 1128.2L191.0 1130.8L193.0 1128.2L195.0 1130.8L197.0 1128.2L199.0 1130.8L201.0 1128.2L203.0 1130.8L205.0 1128.2L207.0 1130.8L209.0 1128.2L211.0 1130.8L213.0 1128.2L215.0 1130.8L217.0 1128.2L219.0 1130.8L221.0 1128.2L223.0 1130.8L225.0 1128.2L227.0 1130.8L229.0 1128.2L231.0 1130.8L233.0 1128.2L235.0 1130.8L237.0 1128.2L239.0 1130.8L241.0 1128.2L243.0 1130.8L245.0 1128.2L247.0 1130.8L249.0 1128.2L251.0 1130.8L253.0 1128.2L255.0 1130.8L257.0 1128.2L259.0 1130.8L261.0 1128.2L263.0 1130.8L265.0 1128.2L267.0 1130.8L269.0 1128.2L271.0 1130.8L273.0 1128.2L275.0 1130.8L277.0 1128.2L279.0 1130.8L281.0 1128.2L283.0 1130.8L285.0 1128.2L287.0 1130.8L289.0 1128.2" fill="none" stroke="#c8cc3a" stroke-width="1"/></svg><svg class="abs" style="left:19px;top:650px" width="12" height="8" viewBox="0 0 12 8"><path d="M0.4 1.6H11.7L6.05 7.4Z" fill="#b4b4b4"/></svg><svg class="abs" style="left:19px;top:716px" width="12" height="8" viewBox="0 0 12 8"><path d="M0.4 1.6H11.7L6.05 7.4Z" fill="#b4b4b4"/></svg><svg class="abs" style="left:19px;top:815px" width="12" height="8" viewBox="0 0 12 8"><path d="M0.4 1.6H11.7L6.05 7.4Z" fill="#b4b4b4"/></svg><svg class="abs" style="left:19px;top:881px" width="12" height="8" viewBox="0 0 12 8"><path d="M0.4 1.6H11.7L6.05 7.4Z" fill="#b4b4b4"/></svg><svg class="abs" style="left:19px;top:1013px" width="12" height="8" viewBox="0 0 12 8"><path d="M0.4 1.6H11.7L6.05 7.4Z" fill="#b4b4b4"/></svg><svg class="abs" style="left:19px;top:1046px" width="12" height="8" viewBox="0 0 12 8"><path d="M0.4 1.6H11.7L6.05 7.4Z" fill="#b4b4b4"/></svg><svg class="abs" style="left:19px;top:1079px" width="12" height="8" viewBox="0 0 12 8"><path d="M0.4 1.6H11.7L6.05 7.4Z" fill="#b4b4b4"/></svg><svg class="abs" style="left:19px;top:1112px" width="12" height="8" viewBox="0 0 12 8"><path d="M0.4 1.6H11.7L6.05 7.4Z" fill="#b4b4b4"/></svg><div class="abs" style="left:2226px;top:175px;width:12px;height:1105px;background:linear-gradient(90deg,#262e36 0,#2e2e2e 2px,#2f2f2f 100%)"></div><div class="abs" style="left:2235.6px;top:179px;width:3px;height:733px;background:#b9b9b9"></div><div class="cj" style="left:10.5px;top:1257px;height:20px;line-height:20px;font-size:20px;color:#d8d8d8;">行</div><div class="abs" style="left:31.5px;top:1252.9px;height:30px;line-height:30px;font-family:'Liberation Serif';font-size:20px;font-weight:bold;color:#d8d8d8;white-space:pre;letter-spacing:4.444px">:</div><div class="abs" style="left:65.5px;top:1252.9px;height:30px;line-height:30px;font-family:'Liberation Serif';font-size:20px;font-weight:normal;color:#d8d8d8;white-space:pre;letter-spacing:0.000px">10</div><div class="cj" style="left:129px;top:1257px;height:20px;line-height:20px;font-size:20px;color:#d8d8d8;">列</div><div class="abs" style="left:150px;top:1252.9px;height:30px;line-height:30px;font-family:'Liberation Serif';font-size:20px;font-weight:bold;color:#d8d8d8;white-space:pre;letter-spacing:4.444px">:</div><div class="abs" style="left:183.5px;top:1252.9px;height:30px;line-height:30px;font-family:'Liberation Serif';font-size:20px;font-weight:normal;color:#d8d8d8;white-space:pre;letter-spacing:0.000px">0</div><div class="cj" style="left:260px;top:1257px;height:20px;line-height:20px;font-size:20px;color:#d8d8d8;">插入</div><svg class="abs" style="left:0;top:1285px" width="100" height="40" viewBox="0 1285 100 40"><rect x="9.4" y="1292.6" width="27" height="27" fill="#222"/><rect x="10" y="1293.2" width="7" height="25.8" fill="#ffffff"/><rect x="17.8" y="1293.2" width="18" height="18.6" fill="#8e8e8e"/><rect x="17.8" y="1312.6" width="18" height="6.4" fill="#8e8e8e"/><rect x="57.2" y="1292.6" width="27.6" height="27" fill="#222"/><rect x="58" y="1293.2" width="7" height="25.8" fill="#8e8e8e"/><rect x="65.8" y="1293.2" width="18.4" height="18.6" fill="#8e8e8e"/><rect x="65.8" y="1312.6" width="18.4" height="6.4" fill="#ffffff"/></svg><svg class="abs" style="left:1660px;top:1288px" width="36" height="36" viewBox="1660 1288 36 36"><path d="M1665 1292.9H1668.6M1667.6 1292.2V1308H1674.9" fill="none" stroke="#e4e4e4" stroke-width="3.2"/><path d="M1674.4 1293.8H1689.8M1682.3 1293.8V1309.6" fill="none" stroke="#e4e4e4" stroke-width="3.2"/><path d="M1666 1318.9Q1669.7 1310.2 1673.5 1317Q1677.3 1310.2 1681 1317Q1684.8 1310.2 1688.4 1318.9" fill="none" stroke="#8e8e8e" stroke-width="2.4"/></svg><div class="abs" style="left:1716px;top:1291.5px;height:30px;line-height:30px;font-family:'Liberation Serif';font-size:20px;font-weight:normal;color:#d8d8d8;white-space:pre;letter-spacing:-0.108px">de_DE</div><div class="abs" style="left:1813px;top:1291.5px;height:30px;line-height:30px;font-family:'Liberation Serif';font-size:20px;font-weight:normal;color:#d8d8d8;white-space:pre;letter-spacing:0.111px">UTF-8</div><div class="cj" style="left:1926px;top:1296px;height:20px;line-height:20px;font-size:20px;color:#d8d8d8;">已就绪</div><div class="cj" style="left:2016.5px;top:1296px;height:20px;line-height:20px;font-size:20px;color:#d8d8d8;">自动</div><div class="cj" style="left:2061.4px;top:1295.5px;width:81px;height:27px;line-height:27px;font-size:27px;font-family:'Liberation Sans','Noto Sans CJK SC',sans-serif;font-weight:900;color:#25bca3;transform:skewX(-12deg) scaleX(1.13);transform-origin:50% 100%;">聚集网</div><div class="abs" style="left:2149px;top:1299.6px;width:15.5px;height:12.4px;background:linear-gradient(90deg,#f4f4f4 0,#f4f4f4 24%,#7e2090 30%,#761a88 100%);font:bold 11px/12.4px 'Liberation Sans';color:#f4c4f4;text-align:right;padding-right:2px;box-sizing:border-box">2</div><div class="abs" style="left:2205.5px;top:1299.6px;width:15.5px;height:12.4px;background:linear-gradient(90deg,#f4f4f4 0,#f4f4f4 24%,#7e2090 30%,#761a88 100%);font:bold 11px/12.4px 'Liberation Sans';color:#f4c4f4;text-align:right;padding-right:2px;box-sizing:border-box">3</div><div class="abs" style="left:2091.2px;top:1301.6px;width:3.6px;height:8.6px;background:#fafafa;box-shadow:0 0 1px #fff"></div><div class="abs" style="left:0;top:1328.6px;width:2238px;height:2.4px;background:#7c7567"></div><div class="cj" style="left:1822.7px;top:1201.5px;height:68px;line-height:68px;font-size:68px;letter-spacing:3.4px;font-family:'Liberation Sans','Noto Sans CJK SC',sans-serif;font-weight:500;color:#ffffff;-webkit-text-stroke:1.2px #fff;filter:drop-shadow(2.5px 2.5px 1.5px rgba(0,0,0,.75));">知乎</div><div class="cj" style="left:2049px;top:1203px;height:65px;line-height:65px;font-size:65px;font-family:'Liberation Sans','Noto Sans CJK SC',sans-serif;font-weight:normal;color:#ffffff;filter:drop-shadow(2.5px 2.5px 1.5px rgba(0,0,0,.75));">仰慕</div><div class="abs" id="at" style="left:1982.8px;top:1191.4px;font-family:'Liberation Sans';font-size:67.5px;line-height:80px;height:80px;color:#fff;-webkit-text-stroke:1.1px #fff;text-shadow:2.3px 2.5px 1.5px rgba(0,0,0,.75)">@</div><div class="ln" style="top:177px"><span class="c-cm">%</span></div><div class="ln" style="top:210px"><span class="c-kw">\documentclass</span><span class="c-w">[12pt]{</span><span class="c-g">article</span><span class="c-w">}</span></div><div class="ln" style="top:276px"><span class="c-cm">%</span><span class="cji" style="width:174px;color:#7183ab;">引入控制系列</span></div><div class="ln" style="top:309px"><span class="c-kw">\input</span><span class="c-w">{def<span class="us">_</span>math}</span></div><div class="ln" style="top:342px"><span class="c-kw">\input</span><span class="c-w">{def<span class="us">_</span>nomath}</span></div><div class="ln" style="top:375px"><span class="c-kw">\input</span><span class="c-w">{def<span class="us">_</span>n-u}</span></div><div class="ln" style="top:441px"><span class="c-kw">\UU</span><span class="c-cm">%</span><span class="cji" style="width:116px;color:#7183ab;">必要宏包</span></div><div class="ln" style="top:540px"><span class="c-cm">%</span><span class="cji" style="width:145px;color:#7183ab;">标题页信息</span></div><div class="ln" style="top:573px"><span class="c-kw">\tit</span><span class="c-w">{</span><span class="cji" style="width:116px;color:#f8f8ec;">测试文档</span><span class="c-w">}{miKe}{</span><span class="c-kw">\today</span><span class="c-w">}</span></div><div class="ln" style="top:639px"><span class="c-p">\begin{</span><span class="c-b">document</span><span class="c-p">}</span></div><div class="ln" style="top:705px"><span class="c-p">\begin{</span><span class="c-b">CJK</span><span class="c-p">}</span><span class="c-w">{UTF8}{song}</span></div><div class="ln" style="top:738px"><span class="c-kw">\maketitle</span></div><div class="ln" style="top:804px"> <span class="c-d">$</span><span class="c-c nb">\sum\li</span><span class="c-y"><span class="us">_</span>{i=1}^{n}</span><span class="c-c nb">\f</span><span class="c-y">{k(k+1)}{k^{2}}</span><span class="c-d">$</span><span class="c-p">\par</span></div><div class="ln" style="top:837px"> <span class="c-d">$$</span></div><div class="ln" style="top:870px"> <span class="c-c nb">\mat</span><span class="c-y">{</span></div><div class="ln" style="top:903px"><span class="c-y">1</span><span class="c-a">&amp;</span><span class="c-y">2</span><span class="c-c nb">\\</span></div><div class="ln" style="top:936px"><span class="c-y">3</span><span class="c-a">&amp;</span><span class="c-y">4</span><span class="c-c nb">\\</span></div><div class="ln" style="top:969px"><span class="c-y">}</span></div><div class="ln" style="top:1002px"> <span class="c-d">$$</span> <span class="c-p">\par</span></div><div class="ln" style="top:1035px"> <span class="cji" style="width:232px;color:#f8f8ec;">测试一下配色方案</span><span class="c-p">\par</span></div><div class="ln" style="top:1068px"> <span class="cji" style="width:232px;color:#f8f8ec;">测试一下配色方案</span><span class="c-p">\par</span></div><div class="ln" style="top:1101px"> <span class="cji" style="width:232px;color:#f8f8ec;">测试一下配色方案</span><span class="c-p">\par</span></div></body></html>
